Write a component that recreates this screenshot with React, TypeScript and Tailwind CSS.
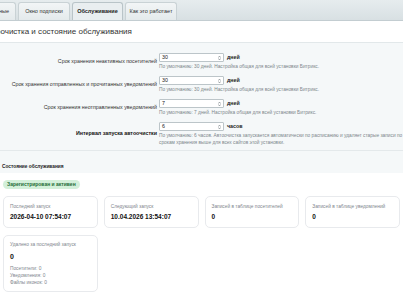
import React from "react";

const tabs = [
  { label: "Основные", active: false, w: "w-[40px] ml-[-24px]" },
  { label: "Окно подписки", active: false, w: "w-[52px]" },
  { label: "Обслуживание", active: true, w: "w-[51px]" },
  { label: "Как это работает", active: false, w: "w-[52px]" },
];

const rows = [
  {
    label: "Срок хранения неактивных посетителей",
    value: "30",
    unit: "дней",
    help: ["По умолчанию: 30 дней. Настройка общая для всей установки Битрикс."],
    bold: false,
  },
  {
    label: "Срок хранения отправленных и прочитанных уведомлений",
    value: "30",
    unit: "дней",
    help: ["По умолчанию: 30 дней. Настройка общая для всей установки Битрикс."],
    bold: false,
  },
  {
    label: "Срок хранения неотправленных уведомлений",
    value: "7",
    unit: "дней",
    help: ["По умолчанию: 7 дней. Настройка общая для всей установки Битрикс."],
    bold: false,
  },
  {
    label: "Интервал запуска автоочистки",
    value: "6",
    unit: "часов",
    help: [
      "По умолчанию: 6 часов. Автоочистка запускается автоматически по расписанию и удаляет старые записи по",
      "срокам хранения выше для всех сайтов этой установки.",
    ],
    bold: true,
  },
];

const stats = [
  { label: "Последний запуск", value: "2026-04-10 07:54:07" },
  { label: "Следующий запуск", value: "10.04.2026 13:54:07" },
  { label: "Записей в таблице посетителей", value: "0" },
  { label: "Записей в таблице уведомлений", value: "0" },
];

function Spinner() {
  return (
    <svg width="3" height="6" viewBox="0 0 6 12" className="text-[#6b7478]">
      <path d="M1 5 L3 2 L5 5" fill="none" stroke="currentColor" strokeWidth="1.2" />
      <path d="M1 7 L3 10 L5 7" fill="none" stroke="currentColor" strokeWidth="1.2" />
    </svg>
  );
}

export default function App() {
  return (
    <div className="w-[403px] h-[294px] overflow-hidden bg-white font-['Liberation_Sans',Arial,sans-serif]">
      {/* Tabs */}
      <div className="h-[21px] flex items-end gap-[2px] bg-gradient-to-b from-[#e6ecee] to-[#d8e0e3] border-b border-[#c3cdd1]">
        {tabs.map((t) => (
          <div
            key={t.label}
            className={`${t.w} shrink-0 h-[18px] flex items-center justify-center whitespace-nowrap rounded-t-[3px] border border-b-0 text-[5.5px] ${
              t.active
                ? "bg-[#e9eef0] border-[#b9c4c8] font-bold text-[#222]"
                : "bg-gradient-to-b from-[#f2f5f6] to-[#e4eaec] border-[#c9d2d5] text-[#333]"
            }`}
          >
            {t.label}
          </div>
        ))}
      </div>

      {/* Title */}
      <div className="h-[22px] flex items-center border-b border-[#e2e8ea]">
        <div className="ml-[-17px] whitespace-nowrap text-[8px] text-[#333]">
          Автоочистка и состояние обслуживания
        </div>
      </div>

      {/* Form */}
      <div className="bg-[#f5f8f9] pt-[10px] pb-[4px] flex flex-col gap-[6px]">
        {rows.map((r) => (
          <div key={r.label} className="grid grid-cols-[157px_1fr] gap-x-[2px] items-center">
            <div
              className={`text-right whitespace-nowrap text-[5.3px] ${
                r.bold ? "font-bold text-[#111]" : "text-[#333]"
              }`}
            >
              {r.label}
            </div>
            <div>
              <div className="flex items-center gap-[3px] h-[9px]">
                <div className="w-[65px] h-[9px] bg-white border border-[#bcc5c9] rounded-[1px] flex items-center justify-between pl-[2px] pr-[2px]">
                  <span className="text-[5.3px] text-[#222] leading-none">{r.value}</span>
                  <Spinner />
                </div>
                <span className="text-[5.3px] text-[#222] font-semibold">{r.unit}</span>
              </div>
              <div className="mt-[1px] text-[4.8px] leading-[7px] text-[#7d878b] whitespace-nowrap">
                {r.help.map((h) => (
                  <div key={h}>{h}</div>
                ))}
              </div>
            </div>
          </div>
        ))}
      </div>

      {/* Maintenance status header */}
      <div className="bg-[#f5f8f9] border-t border-[#e4e9eb] pt-[12px] pb-[3px] pl-[2px]">
        <div className="text-[4.8px] leading-[7px] font-bold text-[#222]">Состояние обслуживания</div>
      </div>

      {/* Status */}
      <div className="px-[3px]">
        <div className="mt-[7px] flex">
          <div className="flex h-[9px] items-center rounded-full bg-[#d3f0da] px-[4px] text-[5px] font-semibold text-[#1d6b36]">
            Зарегистрирован и активен
          </div>
        </div>
        <div className="mt-[7px] grid grid-cols-4 gap-x-[6px] gap-y-[7px]">
          {stats.map((s) => (
            <div key={s.label} className="h-[32px] rounded-[5px] border border-[#e8eaed] bg-white px-[6px] pt-[7px]">
              <div className="text-[4.8px] leading-[6px] text-[#80868d] whitespace-nowrap">{s.label}</div>
              <div className="mt-[3px] text-[6.5px] leading-[7px] font-bold text-[#111] whitespace-nowrap">{s.value}</div>
            </div>
          ))}
          <div className="h-[57px] rounded-[5px] border border-[#e8eaed] bg-white px-[6px] pt-[6px]">
            <div className="text-[4.8px] leading-[6px] text-[#80868d] whitespace-nowrap">Удалено за последний запуск</div>
            <div className="mt-[4px] text-[7px] leading-[9px] font-bold text-[#111]">0</div>
            <div className="mt-[4px] text-[4.8px] leading-[7px] text-[#80868d]">
              <div>Посетители: 0</div>
              <div>Уведомления: 0</div>
              <div>Файлы иконок: 0</div>
            </div>
          </div>
        </div>
      </div>
    </div>
  );
}
